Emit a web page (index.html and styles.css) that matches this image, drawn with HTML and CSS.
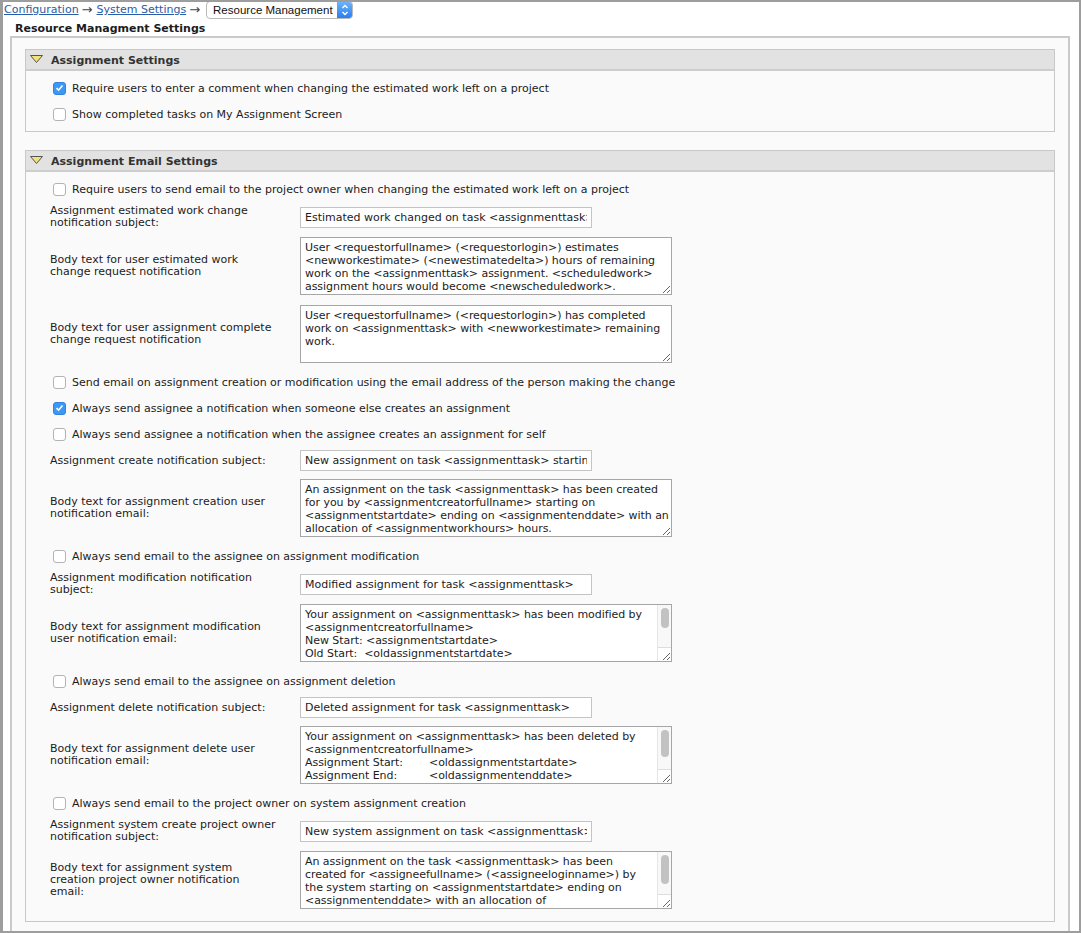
FILE: index.html
```
<!DOCTYPE html>
<html lang="en">
<head>
  <meta charset="UTF-8" />
  <title>Resource Managment Settings</title>
  <link rel="stylesheet" href="styles.css">
</head>
<body>
  <div class="frame">
    <div class="crumbs">
      <a href="#">Configuration</a><span class="arrow">&rarr;</span><a href="#">System Settings</a><span class="arrow">&rarr;</span>
      <span class="fake-select">Resource Management
        <span class="stepper">
          <svg width="14" height="16" viewBox="0 0 14 16">
            <polyline points="4.5,6 7,3.5 9.5,6" fill="none" stroke="#fff" stroke-width="1.4"/>
            <polyline points="4.5,10 7,12.5 9.5,10" fill="none" stroke="#fff" stroke-width="1.4"/>
          </svg>
        </span>
      </span>
    </div>
    <div class="page-title">Resource Managment Settings</div>

    <div class="panel">
      <div class="section">
        <div class="section-head">
          <svg class="toggle" width="13" height="8" viewBox="0 0 13 8"><polygon points="0.5,0.5 12.5,0.5 6.5,7.5" fill="#f2e27c" stroke="#555"/></svg>
          Assignment Settings
        </div>
        <div class="section-body">
          <div class="check-row"><span class="cb checked"><svg width="9" height="8" viewBox="0 0 9 8"><polyline points="1.5,4.2 3.6,6.2 7.5,1.5" fill="none" stroke="#fff" stroke-width="1.6"/></svg></span>Require users to enter a comment when changing the estimated work left on a project</div>
          <div class="check-row"><span class="cb"></span>Show completed tasks on My Assignment Screen</div>
        </div>
      </div>

      <div class="section">
        <div class="section-head">
          <svg class="toggle" width="13" height="8" viewBox="0 0 13 8"><polygon points="0.5,0.5 12.5,0.5 6.5,7.5" fill="#f2e27c" stroke="#555"/></svg>
          Assignment Email Settings
        </div>
        <div class="section-body">
          <div class="check-row"><span class="cb"></span>Require users to send email to the project owner when changing the estimated work left on a project</div>

          <div class="field-row">
            <div class="field-label">Assignment estimated work change notification subject:</div>
            <div class="field-input"><input type="text" value="Estimated work changed on task <assignmenttask> on project <projectname>"></div>
          </div>
          <div class="field-row">
            <div class="field-label">Body text for user estimated work change request notification</div>
            <div class="field-input ta-wrap"><textarea wrap="off">User <requestorfullname> (<requestorlogin>) estimates
<newworkestimate> (<newestimatedelta>) hours of remaining
work on the <assignmenttask> assignment. <scheduledwork>
assignment hours would become <newscheduledwork>.</textarea></div>
          </div>
          <div class="field-row">
            <div class="field-label">Body text for user assignment complete change request notification</div>
            <div class="field-input ta-wrap"><textarea wrap="off">User <requestorfullname> (<requestorlogin>) has completed
work on <assignmenttask> with <newworkestimate> remaining
work.</textarea></div>
          </div>

          <div class="check-row"><span class="cb"></span>Send email on assignment creation or modification using the email address of the person making the change</div>
          <div class="check-row"><span class="cb checked"><svg width="9" height="8" viewBox="0 0 9 8"><polyline points="1.5,4.2 3.6,6.2 7.5,1.5" fill="none" stroke="#fff" stroke-width="1.6"/></svg></span>Always send assignee a notification when someone else creates an assignment</div>
          <div class="check-row"><span class="cb"></span>Always send assignee a notification when the assignee creates an assignment for self</div>

          <div class="field-row">
            <div class="field-label">Assignment create notification subject:</div>
            <div class="field-input"><input type="text" value="New assignment on task <assignmenttask> starting <assignmentstartdate>"></div>
          </div>
          <div class="field-row">
            <div class="field-label">Body text for assignment creation user notification email:</div>
            <div class="field-input ta-wrap"><textarea wrap="off">An assignment on the task <assignmenttask> has been created
for you by <assignmentcreatorfullname> starting on
<assignmentstartdate> ending on <assignmentenddate> with an
allocation of <assignmentworkhours> hours.</textarea></div>
          </div>

          <div class="check-row"><span class="cb"></span>Always send email to the assignee on assignment modification</div>
          <div class="field-row">
            <div class="field-label">Assignment modification notification subject:</div>
            <div class="field-input"><input type="text" value="Modified assignment for task <assignmenttask>"></div>
          </div>
          <div class="field-row">
            <div class="field-label">Body text for assignment modification user notification email:</div>
            <div class="field-input ta-wrap scrolls"><textarea wrap="off">Your assignment on <assignmenttask> has been modified by
<assignmentcreatorfullname>
New Start: <assignmentstartdate>
Old Start:  <oldassignmentstartdate>
New End: <assignmentenddate>
Old End:  <oldassignmentenddate>
New Hours: <assignmentworkhours>
Old Hours:  <oldassignmentworkhours>
New Units: <assignmentunits>
Old Units:  <oldassignmentunits></textarea><span class="vscroll"><span class="thumb" style="height: 20px"></span></span><span class="corner"></span></div>
          </div>

          <div class="check-row"><span class="cb"></span>Always send email to the assignee on assignment deletion</div>
          <div class="field-row">
            <div class="field-label">Assignment delete notification subject:</div>
            <div class="field-input"><input type="text" value="Deleted assignment for task <assignmenttask>"></div>
          </div>
          <div class="field-row">
            <div class="field-label">Body text for assignment delete user notification email:</div>
            <div class="field-input ta-wrap scrolls"><textarea wrap="off">Your assignment on <assignmenttask> has been deleted by
<assignmentcreatorfullname>
Assignment Start:	<oldassignmentstartdate>
Assignment End:	<oldassignmentenddate>
Assignment Hours:	<oldassignmentworkhours>
Assignment Units:	<oldassignmentunits></textarea><span class="vscroll"><span class="thumb" style="height: 27px"></span></span><span class="corner"></span></div>
          </div>

          <div class="check-row"><span class="cb"></span>Always send email to the project owner on system assignment creation</div>
          <div class="field-row">
            <div class="field-label">Assignment system create project owner notification subject:</div>
            <div class="field-input"><input type="text" value="New system assignment on task <assignmenttask>"></div>
          </div>
          <div class="field-row">
            <div class="field-label">Body text for assignment system creation project owner notification<br>email:</div>
            <div class="field-input ta-wrap scrolls"><textarea wrap="off">An assignment on the task <assignmenttask> has been
created for <assigneefullname> (<assigneeloginname>) by
the system starting on <assignmentstartdate> ending on
<assignmentenddate> with an allocation of
<assignmentworkhours> hours.

Project: <projectname></textarea><span class="vscroll"><span class="thumb" style="height: 29px"></span></span><span class="corner"></span></div>
          </div>
        </div>
      </div>
    </div>
  </div>
</body>
</html>
```

FILE: styles.css
```
html, body {
  margin: 0;
  padding: 0;
  background: #fff;
}
body {
  font-family: "DejaVu Sans", Verdana, sans-serif;
  font-size: 11px;
  color: #1c1c1c;
}
.frame {
  box-sizing: border-box;
  height: 933px;
  overflow: hidden;
  border: 2px solid #9d9d9d;
  border-left-width: 3px;
  padding: 0 9px 0 7px;
}
.crumbs {
  height: 17px;
  margin: -1px 0 0 -6px;
  display: flex;
  align-items: center;
}
.crumbs a {
  color: #2a5ca8;
  text-decoration: underline;
}
.arrow {
  margin: 0 4px 0 3px;
  font-size: 13px;
  color: #444;
}
.fake-select {
  position: relative;
  display: inline-flex;
  align-items: center;
  box-sizing: border-box;
  width: 147px;
  height: 18px;
  margin-left: 2px;
  padding-left: 6px;
  border: 1px solid #b9b9b9;
  border-radius: 4px;
  background: #fff;
  font-family: "Liberation Sans", Arial, sans-serif;
  font-size: 11.5px;
  color: #111;
}
.stepper {
  position: absolute;
  right: 0;
  top: 0;
  bottom: 0;
  width: 15px;
  border-radius: 0 3px 3px 0;
  background: linear-gradient(#6cb3fa, #2a7ff0);
  display: flex;
  align-items: center;
  justify-content: center;
}
.page-title {
  font-weight: bold;
  padding: 4px 0 0 5px;
  height: 14px;
  line-height: 13px;
}
.panel {
  border: 2px solid #cacaca;
  background: #fafafa;
  padding: 11px 13px 40px;
}
.section {
  border: 1px solid #c8c8c8;
  background: #fafafa;
  margin-bottom: 18px;
}
.section-head {
  box-sizing: border-box;
  height: 21px;
  background: #e2e2e2;
  border-bottom: 2px solid #cdcdcd;
  display: flex;
  align-items: flex-start;
  padding: 4px 0 0 4px;
  line-height: 13px;
  font-weight: bold;
  color: #333;
}
.toggle {
  margin: 1px 8px 0 0;
}
.section-body {
  padding: 4px 0;
}
.section:last-child .section-body {
  padding-bottom: 7px;
}
.check-row {
  height: 26px;
  display: flex;
  align-items: center;
  padding-left: 27px;
}
.field-row + .check-row {
  margin-top: 1px;
}
.cb {
  box-sizing: border-box;
  width: 13px;
  height: 13px;
  margin-right: 6px;
  border: 1px solid #b3b3b3;
  border-radius: 3px;
  background: #fff;
  display: inline-flex;
  align-items: center;
  justify-content: center;
}
.cb.checked {
  background: #3c97f7;
  border-color: #3283e0;
}
.field-row {
  display: flex;
  align-items: center;
  padding: 3px 0;
}
.field-label {
  width: 229px;
  padding-left: 24px;
  margin-right: 21px;
  line-height: 12px;
}
.field-input input {
  box-sizing: border-box;
  width: 292px;
  height: 21px;
  margin: 0;
  padding: 0 4px;
  border: 1px solid #c4c4c4;
  background: #fff;
  font: inherit;
  color: #1c1c1c;
}
.ta-wrap {
  position: relative;
  width: 372px;
  margin: 2px 0;
}
.ta-wrap textarea {
  display: block;
  box-sizing: border-box;
  width: 372px;
  height: 58px;
  margin: 0;
  padding: 3px 0 3px 4px;
  border: 1px solid #a6a6a6;
  background: #fff;
  font: inherit;
  line-height: 13px;
  letter-spacing: -0.05px;
  tab-size: 31px;
  color: #1c1c1c;
  overflow: hidden;
  resize: both;
}
.vscroll {
  position: absolute;
  top: 1px;
  right: 1px;
  bottom: 15px;
  width: 13px;
  background: #f8f8f8;
  border-left: 1px solid #e6e6e6;
}
.thumb {
  position: absolute;
  top: 3px;
  left: 3px;
  width: 8px;
  border-radius: 4px;
  background: #c2c2c2;
}
.corner {
  position: absolute;
  right: 1px;
  bottom: 1px;
  width: 13px;
  height: 13px;
  border-left: 1px solid #e6e6e6;
  border-top: 1px solid #dedede;
}
```
